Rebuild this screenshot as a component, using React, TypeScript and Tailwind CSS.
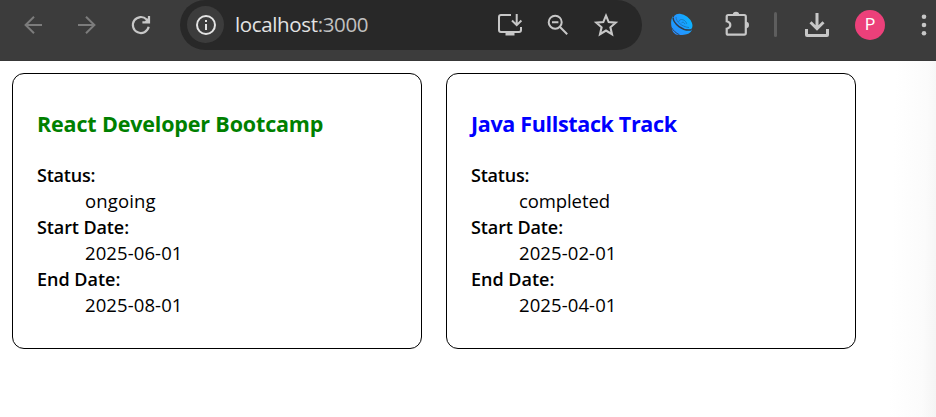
import React from "react";

type Cohort = {
  title: string;
  status: string;
  start: string;
  end: string;
  titleClass: string;
  statusClass: string;
};

const cohorts: Cohort[] = [
  {
    title: "React Developer Bootcamp",
    status: "ongoing",
    start: "2025-06-01",
    end: "2025-08-01",
    titleClass: "text-[#008000] tracking-[-0.16px]",
    statusClass: "tracking-[0.15px]",
  },
  {
    title: "Java Fullstack Track",
    status: "completed",
    start: "2025-02-01",
    end: "2025-04-01",
    titleClass: "text-[#0000ff] tracking-[-0.34px]",
    statusClass: "tracking-[-0.1px]",
  },
];

function Toolbar() {
  return (
    <header className="flex h-[61px] items-start border-b border-[#383838] bg-[#3c3c3c] text-[#c7c7c7]">
      <svg className="ml-[21px] mt-[13px] h-6 w-6 shrink-0 text-[#7c7c7c]" viewBox="0 0 24 24" fill="none" stroke="currentColor" strokeWidth="2">
        <path d="M21 12H4.5M13 3.8 4.6 12l8.4 8.3" />
      </svg>
      <svg className="ml-[30px] mt-[13px] h-6 w-6 shrink-0 text-[#7c7c7c]" viewBox="0 0 24 24" fill="none" stroke="currentColor" strokeWidth="2">
        <path d="M3 12h16.5M11 3.8l8.4 8.2-8.4 8.3" />
      </svg>
      <svg className="ml-[30px] mt-[13px] h-6 w-6 shrink-0" viewBox="0 0 24 24" fill="none" stroke="currentColor" strokeWidth="2.2">
        <path d="M19.7 13.8A8 8 0 1 1 17.6 6.4l2 2" />
        <path d="M20 3v6.4h-6.600M16.500 9.200l3.300-3.300" />
      </svg>

      <div className="ml-[27px] flex h-[50px] w-[462px] shrink-0 items-start rounded-full bg-[#282828]">
        <span className="ml-[7px] mt-[6px] flex h-[37px] w-[37px] shrink-0 items-center justify-center rounded-full bg-[#3c3c3c] text-[#e3e3e3]">
          <svg className="h-[22px] w-[22px]" viewBox="0 0 22 22" fill="none" stroke="currentColor" strokeWidth="2">
            <circle cx="11" cy="11" r="9" />
            <path d="M11 10v6M11 6v2" />
          </svg>
        </span>
        <span className="ml-[11px] w-[200px] shrink-0 whitespace-nowrap font-['Open_Sans',sans-serif] text-[20.5px] leading-[49px] tracking-[-0.36px] text-[#e3e3e3]">
          localhost<span className="text-[#c0c0c0]">:3000</span>
        </span>
        <svg className="ml-[61px] mt-[12px] h-[26px] w-[28px] shrink-0" viewBox="0 0 28 26" fill="none" stroke="currentColor" strokeWidth="2">
          <path d="M15 3H5q-2 0-2 2v13q0 2 2 2h18q2 0 2-2v-3" />
          <path d="M20.7 2v11M16 8.500l4.700 4.700 4.700-4.700" />
          <path d="M9.500 20h9v3.500h-9z" fill="currentColor" stroke="none" />
        </svg>
        <svg className="ml-[22px] mt-[13px] h-6 w-6 shrink-0" viewBox="0 0 24 24" fill="none" stroke="currentColor" strokeWidth="2">
          <circle cx="9.2" cy="9.2" r="6.5" />
          <path d="M14 14l7.2 7.2M6 9.2h6.4" />
        </svg>
        <svg className="ml-[23px] mt-[12px] h-[26px] w-[26px] shrink-0" viewBox="0 0 26 26" fill="none" stroke="currentColor" strokeWidth="2.1">
          <path d="M13 3.700l2.700 6.400 7 .6-5.300 4.600 1.600 6.900-6-3.700-6 3.700 1.600-6.900-5.300-4.600 7-.6z" />
        </svg>
      </div>

      <svg className="ml-[28px] mt-[12px] h-6 w-6 shrink-0" viewBox="0 0 24 24">
        <defs>
          <linearGradient id="dish" x1="0" y1="1" x2="0.8" y2="0">
            <stop offset="0" stopColor="#2f86ff" />
            <stop offset="1" stopColor="#08b6ff" />
          </linearGradient>
        </defs>
        <path d="M2.500 4.500C.6 8 1 12.500 1.700 15.500c.3 3.500 2.300 6.500 5.300 7.300 2.500.5 5 .3 7 0 3.500-.3 6.500-1.600 8-4.800z" fill="url(#dish)" />
        <ellipse cx="13" cy="10.200" rx="10.700" ry="6.900" transform="rotate(38 13 10.200)" fill="url(#dish)" />
        <path d="M3 5.500C3.300 11.500 12.500 19.500 21.500 17.800" fill="none" stroke="#303c4a" strokeWidth="1.500" />
        <path d="M1.500 15.500c1.800 3.200 4.500 5.600 8 7.300" fill="none" stroke="#303c4a" strokeWidth=".9" />
        <path d="M6 5c0 4.500 6 10 13 10.500M8.700 9.800c.8-3.800 6.800-2.600 8 2M11.400 11.200c1-1.800 3-.8 3.500 1" fill="none" stroke="#1678b5" strokeWidth=".9" />
      </svg>
      <svg className="ml-[29px] mt-[11px] h-[26px] w-[28px] shrink-0" viewBox="0 0 28 26">
        <path d="M5.200 4h16q1.600 0 1.600 1.600v16.500q0 1.600-1.600 1.600h-16q-1.500 0-1.500-1.500v-4.500c4.800-1.200 4.800-6.200 0-7.400V5.500q0-1.500 1.500-1.500z" fill="none" stroke="currentColor" strokeWidth="2.200" />
        <path d="M9.800 4a3.200 3.200 0 0 1 6.400 0zM22.800 10.800a3.200 3.200 0 0 1 0 6.400z" fill="currentColor" />
      </svg>
      <span className="ml-[23px] mt-[12px] h-[25px] w-[3px] shrink-0 rounded-full bg-[#5e5e5e]" />
      <svg className="ml-[27px] mt-[12px] h-[26px] w-[26px] shrink-0" viewBox="0 0 26 26" fill="none" stroke="currentColor" strokeWidth="3">
        <path d="M13 1v15M6.500 10.200l6.500 6.500 6.500-6.500M2.500 17v6q0 .5.500.5h20q.500 0 .500-.500v-6" />
      </svg>
      <span className="ml-[25px] mt-[10px] flex h-[30px] w-[30px] shrink-0 items-center justify-center rounded-full bg-[#ec407a] font-[Roboto,sans-serif] text-[16px] leading-none text-white">
        P
      </span>
      <svg className="ml-[36px] mt-[13px] h-6 w-[6px] shrink-0" viewBox="0 0 6 24" fill="currentColor">
        <circle cx="3" cy="3.700" r="2.300" />
        <circle cx="3" cy="12" r="2.300" />
        <circle cx="3" cy="20.300" r="2.300" />
      </svg>
    </header>
  );
}

function CohortCard({ cohort }: { cohort: Cohort }) {
  return (
    <article className="h-[276px] w-[410px] rounded-[12px] border border-black px-6 pt-[34px]">
      <h3 className={`whitespace-nowrap text-[21.500px] leading-[32px] font-bold ${cohort.titleClass}`}>{cohort.title}</h3>
      <dl className="mt-[22px] text-[18.500px] leading-[26px] text-black">
        <dt className="text-[18px] font-semibold tracking-[-0.2px]">Status:</dt>
        <dd className={`ml-12 ${cohort.statusClass}`}>{cohort.status}</dd>
        <dt className="text-[18px] font-semibold tracking-[-0.1px]">Start Date:</dt>
        <dd className="ml-12 tracking-[0.1px]">{cohort.start}</dd>
        <dt className="text-[18px] font-semibold">End Date:</dt>
        <dd className="ml-12 tracking-[0.1px]">{cohort.end}</dd>
      </dl>
    </article>
  );
}

export default function App() {
  return (
    <div className="flex h-[417px] w-[936px] flex-col overflow-hidden bg-white font-['Open_Sans',sans-serif]">
      <Toolbar />
      <main className="flex flex-1 items-start gap-6 bg-[linear-gradient(91deg,#ffffff_95%,#fbfbfb_98.5%,#f4f4f4_100%)] pt-3 pl-3">
        {cohorts.map((c) => (
          <CohortCard key={c.title} cohort={c} />
        ))}
      </main>
    </div>
  );
}
